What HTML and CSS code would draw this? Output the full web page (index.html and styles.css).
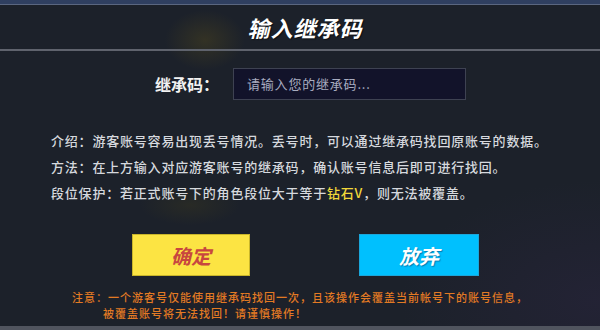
FILE: index.html
```html
<!DOCTYPE html>
<html lang="zh">
<head>
<meta charset="utf-8">
<link rel="stylesheet" href="styles.css">
</head>
<body>
<div class="screen">
  <div class="topbar"></div>
  <div class="header"><h1 class="title">输入继承码</h1></div>
  <div class="field">
    <span class="field-label">继承码：</span>
    <div class="input">请输入您的继承码...</div>
  </div>
  <div class="info">
    <p>介绍：游客账号容易出现丢号情况。丢号时，可以通过继承码找回原账号的数据。</p>
    <p>方法：在上方输入对应游客账号的继承码，确认账号信息后即可进行找回。</p>
    <p>段位保护：若正式账号下的角色段位大于等于<span class="hl">钻石V</span>，则无法被覆盖。</p>
  </div>
  <div class="actions">
    <div class="btn btn-ok">确定</div>
    <div class="btn btn-cancel">放弃</div>
  </div>
  <div class="notice">
    <p class="n1">注意：一个游客号仅能使用继承码找回一次，且该操作会覆盖当前帐号下的账号信息，</p>
    <p class="n2">被覆盖账号将无法找回！请谨慎操作！</p>
  </div>
  <div class="bottombar"></div>
</div>
</body>
</html>
```

FILE: styles.css
```css
html, body {
  margin: 0;
  padding: 0;
}
body {
  width: 600px;
  height: 330px;
  overflow: hidden;
  background: #1c212a;
  font-family: "Noto Sans CJK SC", "Noto Sans", sans-serif;
}
.screen {
  position: relative;
  width: 600px;
  height: 330px;
  display: flex;
  flex-direction: column;
  background:
    radial-gradient(ellipse 40px 30px at 205px 40px, rgba(120, 100, 20, 0.25), transparent),
    radial-gradient(ellipse 50px 20px at 190px 205px, rgba(90, 80, 20, 0.2), transparent),
    radial-gradient(ellipse 200px 120px at 600px 300px, rgba(40, 36, 60, 0.6), transparent),
    #1c212a;
}
.topbar {
  height: 4px;
  background: #2f3f60;
  border-bottom: 1px solid #5a6680;
}
.header {
  height: 44px;
  display: flex;
  align-items: center;
  justify-content: center;
  border-bottom: 2px solid #5f636d;
}
.title {
  margin: 0 0 0 10px;
  font-size: 22px;
  font-weight: bold;
  font-style: italic;
  color: #ffffff;
  letter-spacing: 1px;
  text-shadow: 1px 1px 1px rgba(0, 0, 0, 0.6);
}
.field {
  margin-top: 17px;
  display: flex;
  align-items: center;
  padding-left: 155px;
}
.field-label {
  width: 78px;
  font-size: 16px;
  font-weight: bold;
  color: #f2f2f2;
}
.input {
  box-sizing: border-box;
  width: 233px;
  height: 32px;
  background: #12132a;
  border: 1px solid #3e4252;
  color: #a8acc0;
  font-size: 13px;
  line-height: 30px;
  letter-spacing: 0.8px;
  padding-left: 13px;
}
.info {
  margin-top: 28px;
  padding-left: 51px;
}
.info p {
  margin: 0;
  font-size: 13px;
  font-weight: 500;
  line-height: 26px;
  letter-spacing: 0.8px;
  color: #d6d9de;
}
.hl {
  color: #f2d83a;
}
.actions {
  margin-top: 28px;
  display: flex;
  padding-left: 132px;
  gap: 109px;
}
.btn {
  box-sizing: border-box;
  height: 42px;
  display: flex;
  align-items: center;
  justify-content: center;
  font-size: 20px;
  font-weight: bold;
  font-style: italic;
}
.btn-ok {
  width: 118px;
  background: #fce443;
  border: 1px solid #c9b52a;
  color: #c8473f;
}
.btn-cancel {
  width: 120px;
  background: #00c0fe;
  border: 1px solid #1ba6da;
  color: #ffffff;
  text-shadow: 1px 1px 1px rgba(0, 60, 110, 0.5);
}
.notice {
  margin-top: 13px;
  color: #e27a24;
  font-size: 11px;
  font-weight: 500;
  line-height: 16px;
  letter-spacing: 1px;
}
.notice p {
  margin: 0;
}
.n1 {
  text-align: center;
}
.n2 {
  padding-left: 103px;
}
.bottombar {
  margin-top: auto;
  height: 4px;
  background: #50545e;
}
```
